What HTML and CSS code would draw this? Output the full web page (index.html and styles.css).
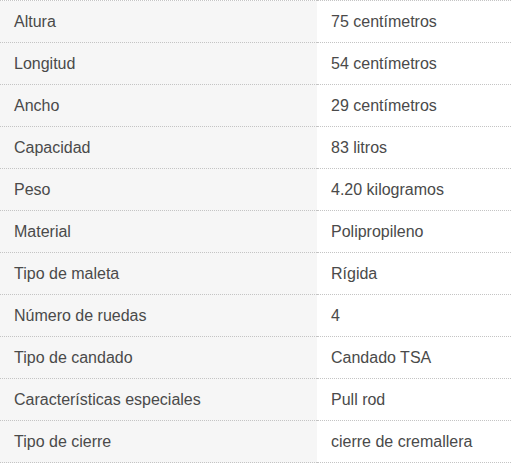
FILE: index.html
```html
<!DOCTYPE html>
<html lang="es">
<head>
<meta charset="utf-8">
<link rel="stylesheet" href="styles.css">
</head>
<body>
<table class="specs">
  <tbody>
    <tr><th>Altura</th><td>75 centímetros</td></tr>
    <tr><th>Longitud</th><td>54 centímetros</td></tr>
    <tr><th>Ancho</th><td>29 centímetros</td></tr>
    <tr><th>Capacidad</th><td>83 litros</td></tr>
    <tr><th>Peso</th><td>4.20 kilogramos</td></tr>
    <tr><th>Material</th><td>Polipropileno</td></tr>
    <tr><th>Tipo de maleta</th><td>Rígida</td></tr>
    <tr><th>Número de ruedas</th><td>4</td></tr>
    <tr><th>Tipo de candado</th><td>Candado TSA</td></tr>
    <tr><th>Características especiales</th><td>Pull rod</td></tr>
    <tr><th>Tipo de cierre</th><td>cierre de cremallera</td></tr>
  </tbody>
</table>
</body>
</html>
```
FILE: styles.css
```css
html, body {
  margin: 0;
  padding: 0;
  background: #ffffff;
}
.specs {
  width: 511px;
  border-collapse: collapse;
  font-family: "Liberation Sans", Arial, sans-serif;
  font-size: 16px;
  color: #4a4a4a;
  border-top: 1px dotted #c4c4c4;
}
.specs th,
.specs td {
  height: 42px;
  padding: 0 14px;
  text-align: left;
  font-weight: normal;
  vertical-align: middle;
  border-bottom: 1px dotted #c4c4c4;
  box-sizing: border-box;
}
.specs th {
  width: 317px;
  background: #f6f6f6;
}
.specs td {
  background: #ffffff;
}
```
